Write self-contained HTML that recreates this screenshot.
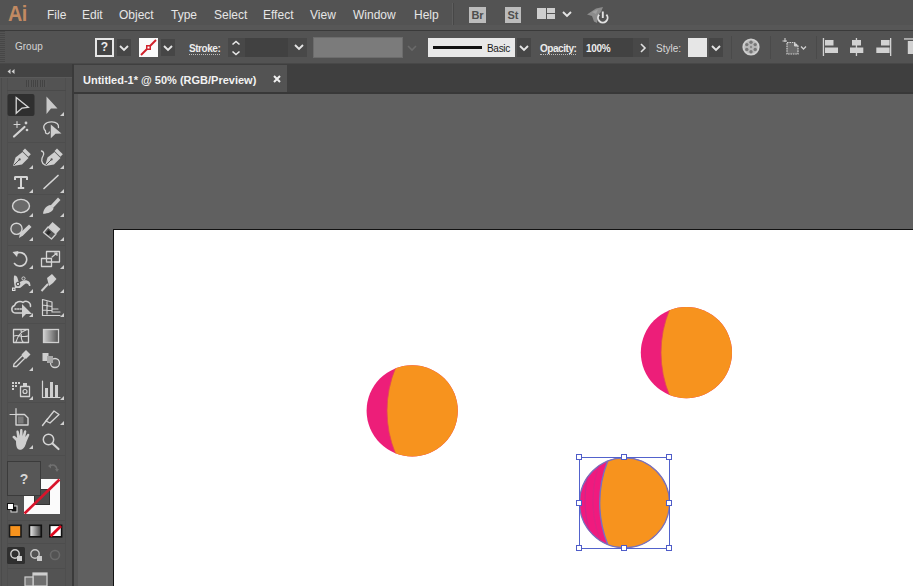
<!DOCTYPE html>
<html><head><meta charset="utf-8">
<style>
*{margin:0;padding:0;box-sizing:border-box}
html,body{width:913px;height:586px;overflow:hidden;background:#535353;font-family:"Liberation Sans",sans-serif;position:relative}
.a{position:absolute}
.mi{position:absolute;top:8px;font-size:12px;color:#e6e6e6;line-height:14px}
.lbl{position:absolute;font-size:11px;color:#e0e0e0;line-height:12px}
.dot{border-bottom:1px dotted #bdbdbd}
.btn{position:absolute;background:#464646}
svg{position:absolute;overflow:visible}
</style></head><body>
<!-- base areas -->
<div class="a" style="left:0;top:0;width:913px;height:25px;background:#535353"></div>
<div class="a" style="left:0;top:25px;width:913px;height:5px;background:#575757"></div>
<div class="a" style="left:0;top:30px;width:913px;height:1px;background:#3a3a3a"></div>
<div class="a" style="left:0;top:31px;width:913px;height:33px;background:#535353"></div>
<div class="a" style="left:0;top:63px;width:913px;height:1px;background:#484848"></div>
<!-- tab bar -->
<div class="a" style="left:73px;top:64px;width:840px;height:30px;background:#3f3f3f"></div>
<div class="a" style="left:74px;top:65px;width:213px;height:28px;background:#535353"></div>
<div class="a" style="left:73px;top:92px;width:840px;height:2px;background:#383838"></div>
<!-- pasteboard -->
<div class="a" style="left:78px;top:94px;width:835px;height:492px;background:#606060"></div>
<div class="a" style="left:113px;top:229px;width:800px;height:357px;background:#fff;border-left:1px solid #111;border-top:1px solid #111"></div>
<!-- toolbar -->
<div class="a" style="left:0;top:64px;width:72px;height:522px;background:#535353"></div>
<div class="a" style="left:0;top:64px;width:72px;height:13px;background:#434343"></div>
<div class="a" style="left:0;top:77px;width:72px;height:1px;background:#5a5a5a"></div>
<div class="a" style="left:72px;top:64px;width:2px;height:522px;background:#3a3a3a"></div>
<div class="a" style="left:74px;top:94px;width:4px;height:492px;background:#575757"></div>

<!-- menu -->
<div class="a" style="left:7.5px;top:4px;font-size:22px;font-weight:bold;color:#c28a62;line-height:20px;letter-spacing:-0.5px;transform:scaleX(0.9);transform-origin:0 0">Ai</div>
<div class="mi" style="left:47px">File</div>
<div class="mi" style="left:82px">Edit</div>
<div class="mi" style="left:119px">Object</div>
<div class="mi" style="left:171px">Type</div>
<div class="mi" style="left:214px">Select</div>
<div class="mi" style="left:263px">Effect</div>
<div class="mi" style="left:310px">View</div>
<div class="mi" style="left:353px">Window</div>
<div class="mi" style="left:414px">Help</div>
<div class="a" style="left:452px;top:3px;width:1px;height:22px;background:#5e5e5e"></div>
<div class="a" style="left:453px;top:3px;width:1px;height:22px;background:#474747"></div>
<div class="a" style="left:469px;top:7px;width:17px;height:16px;background:#bcbcbc;color:#4e4e4e;font-size:11px;font-weight:bold;line-height:16px;text-align:center">Br</div>
<div class="a" style="left:505px;top:7px;width:16px;height:16px;background:#bcbcbc;color:#4e4e4e;font-size:11px;font-weight:bold;line-height:16px;text-align:center">St</div>
<div class="a" style="left:537px;top:8px;width:9px;height:11px;background:#cfcfcf"></div>
<div class="a" style="left:547px;top:8px;width:8px;height:5px;background:#cfcfcf"></div>
<div class="a" style="left:547px;top:14px;width:8px;height:5px;background:#cfcfcf"></div>
<svg style="left:562px;top:11px" width="10" height="6"><path d="M1 1 L5 5 L9 1" stroke="#e4e4e4" stroke-width="1.9" fill="none"/></svg>
<svg style="left:0;top:0" width="620" height="28">
 <path d="M587 14.5 L596 8.5 L603 7 L601 12 L598 15 L597 23 L594 21.5 L592 16 Z" fill="#8c8c8c"/>
 <path d="M592 12 L598 9.5 L596 14 Z" fill="#a0a0a0"/>
 <path d="M599.2 14.6 A4.8 4.8 0 1 0 606.4 14.6" fill="none" stroke="#e2e2e2" stroke-width="1.9"/>
 <path d="M602.8 11.5 V18" stroke="#e2e2e2" stroke-width="1.9"/>
</svg>

<!-- control bar -->
<div class="a" style="left:0;top:31px;width:5px;height:32px;background:repeating-linear-gradient(#474747 0 1px,#535353 1px 2px)"></div>
<div class="lbl" style="left:15px;top:41px;font-size:10px;color:#d4d4d4">Group</div>
<div class="a" style="left:95px;top:38px;width:19px;height:19px;border:2px solid #e6e6e6;background:#444;color:#ececec;font-weight:bold;font-size:12px;line-height:15px;text-align:center">?</div>
<div class="btn" style="left:117px;top:39px;width:14px;height:17px"></div>
<svg style="left:119px;top:45px" width="10" height="6"><path d="M1 1 L5 5 L9 1" stroke="#e4e4e4" stroke-width="1.9" fill="none"/></svg>
<div class="a" style="left:139px;top:38px;width:19px;height:19px;background:#fafafa"></div>
<svg style="left:139px;top:38px" width="19" height="19"><path d="M2 17 L17 2" stroke="#d0202a" stroke-width="2"/><rect x="7" y="7" width="5" height="5" fill="#d0202a"/><rect x="8.5" y="8.5" width="2" height="2" fill="#fff"/></svg>
<div class="btn" style="left:161px;top:39px;width:14px;height:17px"></div>
<svg style="left:163px;top:45px" width="10" height="6"><path d="M1 1 L5 5 L9 1" stroke="#e4e4e4" stroke-width="1.9" fill="none"/></svg>
<div class="lbl dot" style="left:189px;top:43px;font-size:10px;line-height:11px;height:12px;font-weight:bold;letter-spacing:-0.45px;color:#ececec">Stroke:</div>
<div class="btn" style="left:228px;top:38px;width:79px;height:19px;background:#484848"></div>
<svg style="left:231px;top:40px" width="10" height="16"><path d="M1.5 4.5 L5 1.5 L8.5 4.5 M1.5 11.5 L5 14.5 L8.5 11.5" stroke="#e8e8e8" stroke-width="1.6" fill="none"/></svg>
<div class="btn" style="left:245px;top:38px;width:43px;height:19px;background:#414141"></div>
<svg style="left:294px;top:44px" width="10" height="6"><path d="M1 1 L5 5 L9 1" stroke="#e4e4e4" stroke-width="1.9" fill="none"/></svg>
<div class="a" style="left:313px;top:37px;width:90px;height:21px;background:#7b7b7b;border:1px solid #6c6c6c"></div>
<svg style="left:407px;top:45px" width="10" height="6"><path d="M1 1 L5 5 L9 1" stroke="#6a6a6a" stroke-width="1.6" fill="none"/></svg>
<div class="a" style="left:428px;top:38px;width:87px;height:19px;background:#e8e8e8"></div>
<div class="a" style="left:433px;top:46px;width:49px;height:3px;background:#111"></div>
<div class="a" style="left:487px;top:43px;font-size:10px;line-height:12px;letter-spacing:-0.3px;color:#1a1a1a">Basic</div>
<div class="btn" style="left:517px;top:38px;width:14px;height:19px"></div>
<svg style="left:519px;top:45px" width="10" height="6"><path d="M1 1 L5 5 L9 1" stroke="#e4e4e4" stroke-width="1.9" fill="none"/></svg>
<div class="lbl dot" style="left:540px;top:43px;font-size:10px;line-height:11px;height:12px;font-weight:bold;letter-spacing:-0.45px;color:#ececec">Opacity:</div>
<div class="btn" style="left:583px;top:38px;width:66px;height:19px;background:#484848"></div><div class="btn" style="left:583px;top:38px;width:50px;height:19px;background:#424242"></div>
<div class="a" style="left:586px;top:43px;font-size:10px;line-height:12px;font-weight:bold;letter-spacing:-0.3px;color:#ececec">100%</div>

<svg style="left:640px;top:43px" width="6" height="10"><path d="M1 1 L5 5 L1 9" stroke="#e0e0e0" stroke-width="1.6" fill="none"/></svg>
<div class="lbl" style="left:656px;top:43px;font-size:10px;line-height:12px;letter-spacing:0px;color:#d8d8d8">Style:</div>
<div class="a" style="left:688px;top:38px;width:19px;height:19px;background:#e6e6e6"></div>
<div class="btn" style="left:709px;top:38px;width:14px;height:19px"></div>
<svg style="left:711px;top:45px" width="10" height="6"><path d="M1 1 L5 5 L9 1" stroke="#e4e4e4" stroke-width="1.9" fill="none"/></svg>
<div class="a" style="left:731px;top:36px;width:1px;height:23px;background:#4a4a4a"></div>
<svg style="left:741px;top:37px" width="20" height="20">
 <circle cx="10" cy="10" r="8.6" fill="#cfcfcf"/>
 <circle cx="10" cy="10" r="6.8" fill="#b8b8b8"/>
 <g fill="#777"><circle cx="10" cy="5.2" r="1.7"/><circle cx="14.2" cy="7.6" r="1.7"/><circle cx="14.2" cy="12.4" r="1.7"/><circle cx="10" cy="14.8" r="1.7"/><circle cx="5.8" cy="12.4" r="1.7"/><circle cx="5.8" cy="7.6" r="1.7"/></g>
 <circle cx="10" cy="10" r="1.2" fill="#888"/>
</svg>
<div class="a" style="left:770px;top:36px;width:1px;height:23px;background:#4a4a4a"></div>
<svg style="left:782px;top:37px" width="26" height="20">
 <path d="M5 5.5 H12.5 L16 9 V17 H5 Z" fill="#6a6a6a" stroke="#d0d0d0" stroke-width="1.2" stroke-dasharray="1.6 0.8"/>
 <path d="M12.5 5.5 V9 H16" fill="#d0d0d0" stroke="#d0d0d0" stroke-width="1"/>
 <path d="M0.5 4 H5 M3 1 V5" stroke="#d0d0d0" stroke-width="1.1"/>
 <path d="M19 9.5 L21.5 12 L24 9.5" stroke="#d0d0d0" stroke-width="1.3" fill="none"/>
</svg>
<div class="a" style="left:816px;top:36px;width:1px;height:23px;background:#4a4a4a"></div>
<svg style="left:0;top:0" width="913" height="64">
 <g fill="#d2d2d2">
 <rect x="822.8" y="38" width="1.3" height="18"/><rect x="825" y="40" width="8.5" height="5.5"/><rect x="825" y="47.5" width="13" height="5.5"/>
 <rect x="855.8" y="38" width="1.3" height="18"/><rect x="852" y="40" width="9" height="5.5"/><rect x="850" y="47.5" width="13.3" height="5.5"/>
 <rect x="890" y="38" width="1.3" height="18"/><rect x="881" y="40" width="8.6" height="5.5"/><rect x="876.3" y="47.5" width="13.3" height="5.5"/>
 <rect x="904" y="38.3" width="9" height="1.3"/><rect x="907.8" y="41" width="5.2" height="13"/>
 </g>
</svg>

<!-- tab -->
<div class="a" style="left:83px;top:73px;font-size:11px;line-height:14px;color:#f2f2f2;font-weight:bold">Untitled-1* @ 50% (RGB/Preview)</div>
<svg style="left:273px;top:75px" width="8" height="8"><path d="M1 1 L7 7 M7 1 L1 7" stroke="#f0f0f0" stroke-width="2"/></svg>

<!-- toolbar header -->
<svg style="left:6px;top:68px" width="10" height="6"><path d="M4.5 1 L1.5 3.5 L4.5 6 Z M8.5 1 L5.5 3.5 L8.5 6 Z" fill="#d0d0d0"/></svg>
<div class="a" style="left:26px;top:80px;width:21px;height:7px;background:repeating-linear-gradient(90deg,#434343 0 1px,#555 1px 2.3px)"></div>

<!-- TOOLS -->
<svg style="left:0;top:0" width="74" height="586">
 <!-- panel frame -->
 <path d="M7.5 78 V586 M65.5 78 V586" stroke="#4e4e4e" stroke-width="1"/><path d="M1.5 78 V586" stroke="#4b4b4b" stroke-width="1"/>
 <path d="M7 90.5 H66" stroke="#4a4a4a" stroke-width="1"/>
 <!-- selected bg -->
 <rect x="7.5" y="94" width="27" height="22" rx="2" fill="#2f2f2f"/>
 <!-- selection -->
 <path d="M16.2 97.5 L28.3 107.3 L22 108 L16.2 113.3 Z" fill="none" stroke="#d8d8d8" stroke-width="1.3" stroke-linejoin="miter"/>
 <!-- direct selection -->
 <path d="M46.5 96.5 L57.5 108.5 L51 108.5 L46.5 114 Z" fill="#c9c9c9"/>
 <!-- corner triangles -->
 <g fill="#cfcfcf">
  <path d="M64 112 V116 H60 Z"/>
  <path d="M33 165 V169 H29 Z"/><path d="M64 165 V169 H60 Z"/>
  <path d="M33 189 V193 H29 Z"/><path d="M64 189 V193 H60 Z"/>
  <path d="M33 213 V217 H29 Z"/><path d="M64 213 V217 H60 Z"/>
  <path d="M33 237 V241 H29 Z"/><path d="M64 237 V241 H60 Z"/>
  <path d="M33 265 V269 H29 Z"/><path d="M64 265 V269 H60 Z"/>
  <path d="M33 289 V293 H29 Z"/><path d="M64 289 V293 H60 Z"/>
  <path d="M33 313 V317 H29 Z"/><path d="M64 313 V317 H60 Z"/>
  <path d="M33 367 V371 H29 Z"/>
  <path d="M33 396 V400 H29 Z"/><path d="M64 396 V400 H60 Z"/>
  <path d="M64 421 V425 H60 Z"/>
  <path d="M33 445 V449 H29 Z"/>
 </g>
 <g fill="none" stroke="#d4d4d4" stroke-width="1.4" stroke-linecap="round" stroke-linejoin="round">
  <!-- magic wand -->
  <path d="M14 136.5 L24.5 127" stroke-width="2.2"/>
  <path d="M17 121.5 V127.5 M14 124.5 H20" stroke-width="1.1"/>
  <!-- lasso loop -->
  <path d="M45.5 131 C41 126 46 121.5 52 121.8 C56.5 122 59 124.5 58.5 127.5" stroke-width="1.3"/>
  <path d="M45.5 131 C45 134 48.5 135 49.5 132" stroke-width="1.2"/>
  <!-- curvature curve -->
  <path d="M45 165 C41 163 41 159 43 156 C44.5 153.5 43.5 151.5 41.5 151" stroke-width="1.3"/>
  <!-- type T -->
  <path d="M14.8 177 H27.2 M15 176.5 V180 M27 176.5 V180 M21 176.5 V188 M17.8 188 H24.2" stroke-width="2" stroke-linecap="butt"/>
  <!-- line -->
  <path d="M44 188.5 L58 175.5" stroke-width="1.7"/>
  <!-- ellipse -->
  <ellipse cx="21" cy="206" rx="8.5" ry="6.6" fill="#6a6a6a"/>
  <!-- shaper circle -->
  <circle cx="16.5" cy="228.8" r="5.6" fill="#606060" stroke-width="1.4"/>
  <!-- rotate -->
  <path d="M17 253.2 A6.8 6.8 0 1 1 14.5 263.5" stroke-width="1.6"/>
  <!-- scale -->
  <rect x="46.5" y="251.5" width="13" height="10.5" stroke-width="1.3"/>
  <rect x="41.5" y="258.5" width="10" height="8" stroke-width="1.3"/>
  <path d="M52 257 L57 253 M54.5 253 H57 V255.5" stroke-width="1.2"/>
  <!-- free transform cloud -->
  <path d="M22 313 H16 C11 313 10.5 307 14.5 305.5 C15.5 301.5 20.5 300.5 23 302.5 C26 300 31 302 30.5 306.5" stroke-width="1.5"/>
  <path d="M15 309 H22" stroke-width="1.4" stroke-dasharray="1.2 1.4"/>
  <!-- perspective grid -->
  <path d="M42.5 299.5 V315.5 H60 M42.5 299.5 L52 302 V312 M42.5 305 L52 306.5 M42.5 310 L52 310.5 M47 300.5 V314 M52 309 H58 M52 312 H60" stroke-width="1.2"/>
  <!-- mesh -->
  <rect x="13.5" y="329.5" width="15" height="13" stroke-width="1.3"/>
  <path d="M16 342 C18 336 20 332 26 330 M14 336 C18 334 22 338 28 336 M21 330 C22 335 20 339 23 342" stroke-width="1.1"/>
  <!-- eyedropper -->
  <path d="M13.5 366.5 L14 364 L22.5 355.5 L25 358 L16.5 366.5 Z" stroke-width="1.3"/>
  <!-- blend -->
  <circle cx="55" cy="363" r="4.5" stroke-width="1.3" fill="#5e5e5e"/>
  <!-- symbol sprayer bottle -->
  <rect x="20.5" y="386.5" width="9" height="10" stroke-width="1.3"/>
  <circle cx="25" cy="391.5" r="2" stroke-width="1.2"/>
  <!-- column graph -->
  <path d="M42.5 381 V397.5 H60" stroke-width="1.2"/>
  <!-- artboard -->
  <path d="M16 414.5 H24.5 L28 418 V425 H16 Z" stroke-width="1.4"/>
  <path d="M10 414.5 H16 M16 408.5 V414.5" stroke-width="1.2"/>
  <!-- slice knife -->
  <path d="M42.5 425.5 L47.5 419" stroke-width="1.4"/>
  <path d="M46 421 L54 411 L59 414.5 L50 423 Z" stroke-width="1.3"/>
  <!-- zoom -->
  <circle cx="48.5" cy="439.5" r="5.2" stroke-width="1.5"/>
  <path d="M52.5 443.5 L58.5 449" stroke-width="2.2"/>
 </g>
 <g fill="#cfcfcf">
  <!-- wand stars -->
  <circle cx="26" cy="123" r="1.4"/><circle cx="27" cy="130" r="1.3"/>
  <!-- lasso arrow -->
  <path d="M50.8 124.5 L61.5 133.5 L55.5 133.8 L50.8 138.3 Z"/>
  <!-- pen nib -->
  <path d="M13 166 L15.5 157.5 L22.5 152 L28.5 158 L22 164.5 Z"/>
  <path d="M22.5 151 L25 148.5 L30.8 154.3 L28.3 156.8 Z"/>
  <!-- curvature pen -->
  <path d="M45 166 L47.5 157.5 L54.5 152 L60.5 158 L54 164.5 Z"/>
  <path d="M54.5 151 L57 148.5 L62.8 154.3 L60.3 156.8 Z"/>
  <!-- paintbrush -->
  <path d="M50.5 205.5 L58 197.5 L60.5 200 L53 208 Z"/>
  <path d="M43 213.8 C43.5 209 46.5 205.5 50.5 205 L53.5 208 C53 212 48 213.5 43 213.8 Z"/>
  <!-- shaper pencil -->
  <path d="M19 238 L20 233 L29 224.5 L31.5 227 L23 235.5 Z"/>
  <!-- eraser -->
  <path d="M48 227 L52.5 222 L60.5 229 L56 234 Z"/>
  <!-- puppet warp -->
  <path d="M14 276 C15 275 17 276 17.5 278 L19 283 C21 281 24 280 27 280.5 C29.5 281 30.5 283 30.5 286 L29 286 C28.5 284 27 283 25 284 C23 285 22 287 20 288 L15 288 C14 284 13.5 279 14 276 Z" fill="#cfcfcf"/>
  <!-- pin -->
  <path d="M47 278 L52 274 L56.5 279 L53 283 L49 286 Z"/>
  <path d="M41.5 291 L48 284" stroke="#cfcfcf" stroke-width="2"/>
  <!-- free transform arrow -->
  <path d="M22 304 L32 314 L26 314 L22 318 Z"/>
  <!-- eyedropper cap -->
  <path d="M21.5 354.5 L26 350 L30.5 354.5 L26 359 Z"/>
  <!-- blend squares -->
  <rect x="42.5" y="353" width="6" height="8"/>
  <rect x="47" y="356" width="6" height="7" fill="#a8a8a8"/>
  <!-- sprayer dots -->
  <rect x="12" y="382" width="2" height="2"/><rect x="15" y="382" width="2" height="2"/><rect x="18" y="382" width="2" height="2"/>
  <rect x="12" y="385" width="2" height="2"/><rect x="15" y="385" width="2" height="2"/>
  <rect x="12" y="388" width="2" height="2"/>
  <rect x="23" y="383" width="4" height="3"/>
  <!-- columns -->
  <rect x="45" y="388" width="3" height="9"/><rect x="50" y="382" width="3" height="15"/><rect x="55" y="385" width="3" height="12"/>
  <!-- artboard fill lines -->
  <path d="M18 416.5 H23.5 V423.5 H18 Z" fill="#7a7a7a"/>
  <!-- hand -->
  <path d="M16 441 L12.8 437.8 C11.8 436.6 13.3 435 14.8 436 L17.2 438 L16.4 432 C16.2 430.3 18.5 430 18.8 431.7 L19.8 436 L20.1 430.2 C20.1 428.5 22.5 428.5 22.5 430.2 L22.6 436 L24 431.2 C24.4 429.6 26.6 430 26.3 431.7 L25.3 437 L27.3 434.3 C28.3 433.2 30 434.2 29.2 435.6 L26.4 442 C25.3 446.5 23.5 449.8 19.8 449.8 C16.8 449.5 16 446 16 441 Z"/>
 </g>
 <!-- eraser end -->
 <path d="M43.5 232.5 L48 227 L56 234 L51.5 239 Z" fill="#555" stroke="#d0d0d0" stroke-width="1.3" stroke-linejoin="round"/>
 <path d="M46 233 L48.5 230 L51 232.3 L48.5 235.3 Z" fill="#2a2a2a"/>
 <!-- pen slits -->
 <path d="M13.8 165.2 L19 160" stroke="#555" stroke-width="1"/><circle cx="19.6" cy="159.4" r="1.1" fill="#555"/>
 <path d="M45.8 165.2 L51 160" stroke="#555" stroke-width="1"/><circle cx="51.6" cy="159.4" r="1.1" fill="#555"/>
 <!-- rotate arrowhead -->
 <path d="M12.5 252 L18.5 251 L17 257 Z" fill="#d4d4d4"/>
 <!-- puppet pins -->
 <rect x="12" y="287.5" width="3.5" height="3.5" fill="#e0e0e0"/><rect x="13.2" y="288.7" width="1.2" height="1.2" fill="#444"/>
 <circle cx="18" cy="284" r="1.8" fill="none" stroke="#444" stroke-width="1"/>
 <circle cx="23.5" cy="278.5" r="1.6" fill="#535353" stroke="#d0d0d0" stroke-width="1"/>
 <!-- gradient -->
 <defs><linearGradient id="tg" x1="0" x2="1"><stop offset="0" stop-color="#d0d0d0"/><stop offset="1" stop-color="#505050"/></linearGradient>
 <linearGradient id="sg" x1="0" x2="1"><stop offset="0" stop-color="#f2f2f2"/><stop offset="1" stop-color="#3a3a3a"/></linearGradient></defs>
 <rect x="43.5" y="329.5" width="15" height="13" fill="url(#tg)" stroke="#d0d0d0" stroke-width="1.3"/>
</svg>

<!-- fill/stroke -->
<div class="a" style="left:24px;top:479px;width:36px;height:35px;background:#fbfbfb"></div>
<div class="a" style="left:34px;top:489px;width:16px;height:16px;background:#4c4c4c;border:1px solid #333"></div>
<svg style="left:0;top:0" width="74" height="586"><path d="M24.5 513.5 L59.5 479.5" stroke="#d9142b" stroke-width="2.6"/></svg>
<div class="a" style="left:7px;top:461px;width:34px;height:35px;background:#575757;border:1px solid #3b3b3b"></div>
<div class="a" style="left:7px;top:470px;width:34px;height:18px;font-size:14px;line-height:18px;color:#d6d6d6;text-align:center;font-weight:bold">?</div>
<svg style="left:0;top:0" width="74" height="586">
 <path d="M50 466 C53 464 56 465 57 469" stroke="#707070" stroke-width="1.5" fill="none"/>
 <path d="M48 466 L51 463.5 L51 468.5 Z M55 469 L59 469 L57 472 Z" fill="#707070"/>
 <rect x="11" y="506" width="6" height="6" fill="#111" stroke="#ddd" stroke-width="1"/>
 <rect x="7.5" y="503.5" width="6" height="6" fill="#fff" stroke="#111" stroke-width="1"/>
 <!-- color / gradient / none -->
 <rect x="9.5" y="525.3" width="11.5" height="11.5" fill="#f7931e" stroke="#1a1a1a" stroke-width="1.6"/>
 <rect x="29.5" y="525.3" width="11.8" height="11.5" fill="url(#sg)" stroke="#111" stroke-width="1.6"/>
 <rect x="49.8" y="525.3" width="11.8" height="11.5" fill="#fff" stroke="#111" stroke-width="1.6"/>
 <path d="M50.5 536.3 L61 526" stroke="#e0081e" stroke-width="2.8"/>
 <!-- draw modes -->
 <rect x="7" y="547" width="18" height="17" rx="1.5" fill="#2f2f2f"/>
 <circle cx="15" cy="554" r="4.2" fill="none" stroke="#d0d0d0" stroke-width="1.4"/>
 <rect x="17" y="556" width="5" height="5" fill="#d0d0d0"/>
 <circle cx="35" cy="554" r="4.2" fill="none" stroke="#c8c8c8" stroke-width="1.4"/>
 <rect x="37" y="556" width="5" height="5" fill="#c8c8c8"/>
 <circle cx="55" cy="555" r="4.5" fill="none" stroke="#6a6a6a" stroke-width="1.6"/>
 <!-- screen mode -->
 <rect x="33" y="573" width="14" height="13" fill="#6e6e6e" stroke="#cfcfcf" stroke-width="1.2"/>
 <rect x="33" y="573" width="14" height="2.5" fill="#cfcfcf"/>
 <rect x="25" y="577" width="8" height="9" fill="#777" stroke="#cfcfcf" stroke-width="1.2"/>
 <!-- separators -->
 <path d="M8 142.5 H65 M8 194.5 H65 M8 245.5 H65 M8 323.5 H65 M8 402.5 H65 M8 455.5 H65 M8 520.5 H65 M8 543.5 H65 M8 568.5 H65" stroke="#4d4d4d" stroke-width="1"/>
</svg>


<!-- artwork -->
<svg style="left:0;top:0" width="913" height="586">
 <defs>
  <clipPath id="c1"><circle cx="412.2" cy="410.8" r="45.6"/></clipPath>
  <clipPath id="c2"><circle cx="686.4" cy="352.6" r="45.6"/></clipPath>
  <clipPath id="c3"><circle cx="624.5" cy="502.8" r="45.2"/></clipPath>
 </defs>
 <g clip-path="url(#c1)">
  <rect x="360" y="360" width="110" height="110" fill="#ed1e79"/>
  <circle cx="499" cy="410.8" r="112" fill="#f7931e" stroke="#de4a55" stroke-width="0.8"/>
 </g>
 <g clip-path="url(#c2)">
  <rect x="630" y="300" width="110" height="110" fill="#ed1e79"/>
  <circle cx="773" cy="352.6" r="112" fill="#f7931e" stroke="#de4a55" stroke-width="0.8"/>
 </g>
 <g clip-path="url(#c3)">
  <rect x="570" y="450" width="110" height="110" fill="#f01a7e"/>
  <circle cx="711.7" cy="502.8" r="112" fill="#f7931e"/>
 </g>
 <circle cx="624.5" cy="502.8" r="45" fill="none" stroke="#7572c0" stroke-width="1.2"/>
 <g clip-path="url(#c3)" fill="none"><circle cx="697" cy="500" r="112" stroke="#a2389a" stroke-opacity="0.45" stroke-width="1.2"/><circle cx="705" cy="501" r="112" stroke="#b03a90" stroke-opacity="0.3" stroke-width="1.2"/><circle cx="711.7" cy="502.8" r="112" stroke="#7a6fc0" stroke-width="1.4"/></g>
 <rect x="579.5" y="457.5" width="90" height="91" fill="none" stroke="#5262cc" stroke-width="1"/>
 <g fill="#fff" stroke="#4f5cc8" stroke-width="1"><rect x="576.5" y="454.5" width="5" height="5"/><rect x="621.5" y="454.5" width="5" height="5"/><rect x="666.5" y="454.5" width="5" height="5"/><rect x="576.5" y="500.5" width="5" height="5"/><rect x="666.5" y="500.5" width="5" height="5"/><rect x="576.5" y="545.5" width="5" height="5"/><rect x="621.5" y="545.5" width="5" height="5"/><rect x="666.5" y="545.5" width="5" height="5"/></g>
</svg>
</body></html>
